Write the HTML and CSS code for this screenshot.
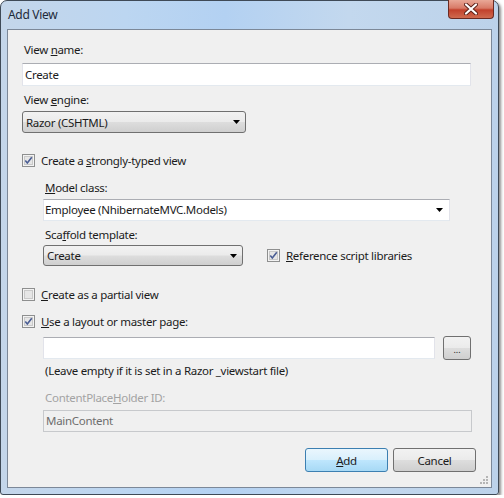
FILE: index.html
```html
<!DOCTYPE html>
<html lang="en">
<head>
  <meta charset="UTF-8" />
  <title>Add View</title>
  <link rel="stylesheet" href="styles.css">
</head>
<body>

<div class="window">
  <div class="titlebar">
    <span class="title">Add View</span>
    <div class="close-btn">
      <svg width="14" height="12" viewBox="0 0 14 12">
        <path d="M2 1.5 L12 10.5 M12 1.5 L2 10.5" stroke="#5a1e16" stroke-width="4" stroke-linecap="round"/>
        <path d="M2 1.5 L12 10.5 M12 1.5 L2 10.5" stroke="#ffffff" stroke-width="2.2" stroke-linecap="round"/>
      </svg>
    </div>
  </div>

  <div class="client">
    <div class="field-label">View <u>n</u>ame:</div>
    <div class="textbox name-box">Create</div>

    <div class="field-label gap-6">View <u>e</u>ngine:</div>
    <div class="combo engine-combo">
      <span>Razor (CSHTML)</span>
      <svg class="arrow" width="7" height="4" viewBox="0 0 7 4"><path d="M0 0 H7 L3.5 4 Z" fill="#000"/></svg>
    </div>

    <div class="check-row typed-row">
      <svg class="check" width="13" height="13" viewBox="0 0 13 13">
        <rect x="0.5" y="0.5" width="12" height="12" fill="#f3f3f3" stroke="#8e8f8f"/>
        <rect x="2.5" y="2.5" width="8" height="8" fill="#e6e6e6" stroke="#c9c9c9"/>
        <path d="M3.3 6.6 L5.3 9 L9.8 3.2" fill="none" stroke="#4b5e94" stroke-width="1.6"/>
      </svg>
      <span>Create a <u>s</u>trongly-typed view</span>
    </div>

    <div class="indent">
      <div class="field-label model-label"><u>M</u>odel class:</div>
      <div class="textbox model-box">
        <span>Employee (NhibernateMVC.Models)</span>
        <svg class="arrow" width="7" height="4" viewBox="0 0 7 4"><path d="M0 0 H7 L3.5 4 Z" fill="#000"/></svg>
      </div>

      <div class="field-label gap-6">Sca<u>f</u>fold template:</div>
      <div class="scaffold-row">
        <div class="combo scaffold-combo">
          <span>Create</span>
          <svg class="arrow" width="7" height="4" viewBox="0 0 7 4"><path d="M0 0 H7 L3.5 4 Z" fill="#000"/></svg>
        </div>
        <div class="check-row ref-row">
          <svg class="check" width="13" height="13" viewBox="0 0 13 13">
            <rect x="0.5" y="0.5" width="12" height="12" fill="#f3f3f3" stroke="#8e8f8f"/>
            <rect x="2.5" y="2.5" width="8" height="8" fill="#e6e6e6" stroke="#c9c9c9"/>
            <path d="M3.3 6.6 L5.3 9 L9.8 3.2" fill="none" stroke="#4b5e94" stroke-width="1.6"/>
          </svg>
          <span><u>R</u>eference script libraries</span>
        </div>
      </div>
    </div>

    <div class="check-row partial-row">
      <svg class="check" width="13" height="13" viewBox="0 0 13 13">
        <rect x="0.5" y="0.5" width="12" height="12" fill="#f3f3f3" stroke="#8e8f8f"/>
        <rect x="2.5" y="2.5" width="8" height="8" fill="#e6e6e6" stroke="#c9c9c9"/>
      </svg>
      <span><u>C</u>reate as a partial view</span>
    </div>

    <div class="check-row layout-row">
      <svg class="check" width="13" height="13" viewBox="0 0 13 13">
        <rect x="0.5" y="0.5" width="12" height="12" fill="#f3f3f3" stroke="#8e8f8f"/>
        <rect x="2.5" y="2.5" width="8" height="8" fill="#e6e6e6" stroke="#c9c9c9"/>
        <path d="M3.3 6.6 L5.3 9 L9.8 3.2" fill="none" stroke="#4b5e94" stroke-width="1.6"/>
      </svg>
      <span><u>U</u>se a layout or master page:</span>
    </div>

    <div class="indent">
      <div class="browse-row">
        <div class="textbox layout-box"></div>
        <div class="btn browse-btn">...</div>
      </div>
      <div class="field-label hint">(Leave empty if it is set in a Razor _viewstart file)</div>

      <div class="field-label disabled placeholder-label">ContentPlace<u>H</u>older ID:</div>
      <div class="textbox disabled-box">MainContent</div>
    </div>

    <div class="button-row">
      <div class="btn default-btn"><u>A</u>dd</div>
      <div class="btn">Cancel</div>
    </div>

    <svg class="grip" width="10" height="10" viewBox="0 0 10 10">
      <g fill="#b5b5b5">
        <rect x="7" y="1" width="2" height="2"/>
        <rect x="4" y="4" width="2" height="2"/><rect x="7" y="4" width="2" height="2"/>
        <rect x="1" y="7" width="2" height="2"/><rect x="4" y="7" width="2" height="2"/><rect x="7" y="7" width="2" height="2"/>
      </g>
    </svg>
  </div>
</div>

</body>
</html>
```

FILE: styles.css
```css
body {
  margin: 0;
  background-color: white;
  font-family: "Noto Sans", "Open Sans", sans-serif;
  font-size: 11.5px;
  letter-spacing: -0.3px;
  color: #1b1b1b;
}
.window {
  width: 499px;
  height: 495px;
  box-sizing: border-box;
  border: 1px solid #3f4a57;
  border-radius: 7px 7px 3px 3px;
  padding: 0 6px 6px 6px;
  display: flex;
  flex-direction: column;
  background: linear-gradient(to right, #c4d6ea 0%, #bcd6f1 25%, #b3d1f2 45%, #c3d8ee 70%, #bcd2ea 100%);
  box-shadow: 2px 2px 3px rgba(0, 0, 0, 0.45);
}
.titlebar {
  height: 28px;
  display: flex;
  justify-content: space-between;
  align-items: flex-start;
}
.title {
  margin-top: 6px;
  padding-left: 1px;
  font-size: 12px;
  line-height: 16px;
  color: #1e2a3a;
}
.close-btn {
  width: 46px;
  height: 19px;
  margin-top: -1px;
  margin-right: -2px;
  box-sizing: border-box;
  border: 1px solid #6b2a22;
  border-top: none;
  border-radius: 0 0 4px 4px;
  background: linear-gradient(#e9a897 0%, #d87a67 45%, #c2412c 55%, #cf6a4f 100%);
  display: flex;
  align-items: center;
  justify-content: center;
}
.client {
  position: relative;
  flex: 1;
  box-sizing: border-box;
  border: 1px solid #7c8898;
  background: #f0f0f0;
  padding: 12px 20px 0 14px;
}
.field-label {
  line-height: 15px;
  padding-left: 2px;
}
.gap-6 {
  margin-top: 6px;
}
.textbox {
  box-sizing: border-box;
  height: 22px;
  background: white;
  border: 1px solid #e2e3ea;
  border-top-color: #abadb3;
  border-bottom-color: #e3e9ef;
  line-height: 20px;
  padding-left: 2px;
  display: flex;
  align-items: center;
  justify-content: space-between;
}
.name-box {
  margin-top: 6px;
  height: 23px;
  width: 449px;
}
.combo {
  box-sizing: border-box;
  border: 1px solid #707070;
  border-radius: 3px;
  background: linear-gradient(#f2f2f2 0%, #ebebeb 48%, #dddddd 52%, #cfcfcf 100%);
  display: flex;
  align-items: center;
  justify-content: space-between;
  padding: 0 5px 0 3px;
}
.engine-combo {
  margin-top: 4px;
  width: 224px;
  height: 22px;
}
.arrow {
  flex-shrink: 0;
}
.check-row {
  display: flex;
  align-items: center;
  gap: 6px;
  height: 15px;
}
.typed-row {
  margin-top: 20px;
}
.indent {
  padding-left: 21px;
}
.model-label {
  margin-top: 12px;
}
.model-box {
  margin-top: 4px;
  width: 407px;
  padding-left: 1px;
  padding-right: 6px;
}
.scaffold-row {
  display: flex;
  align-items: center;
  margin-top: 3px;
}
.scaffold-combo {
  width: 200px;
  height: 21px;
}
.ref-row {
  margin-left: 24px;
}
.partial-row {
  margin-top: 21px;
}
.layout-row {
  margin-top: 12px;
}
.browse-row {
  display: flex;
  align-items: center;
  margin-top: 7px;
  height: 24px;
}
.layout-box {
  width: 392px;
}
.btn {
  box-sizing: border-box;
  width: 83px;
  height: 24px;
  border: 1px solid #707070;
  border-radius: 3px;
  background: linear-gradient(#f2f2f2 0%, #ebebeb 48%, #dddddd 52%, #cfcfcf 100%);
  display: flex;
  align-items: center;
  justify-content: center;
  line-height: 15px;
}
.browse-btn {
  width: 28px;
  margin-left: 8px;
  font-size: 9px;
  letter-spacing: 0;
  padding-top: 3px;
}
.hint {
  margin-top: 3px;
}
.disabled {
  color: #a3a3a3;
}
.placeholder-label {
  margin-top: 12px;
}
.disabled-box {
  margin-top: 5px;
  width: 429px;
  background: #f0f0f0;
  border: 1px solid #c7c9cc;
  color: #6d6d6d;
}
.button-row {
  display: flex;
  justify-content: flex-end;
  gap: 5px;
  margin-top: 16px;
  margin-right: -5px;
}
.default-btn {
  border-color: #3c7fb1;
  background: linear-gradient(#eaf6fd 0%, #d9f0fc 48%, #bee6fd 52%, #a7d9f5 100%);
}
.grip {
  position: absolute;
  right: 2px;
  bottom: 2px;
}
```
